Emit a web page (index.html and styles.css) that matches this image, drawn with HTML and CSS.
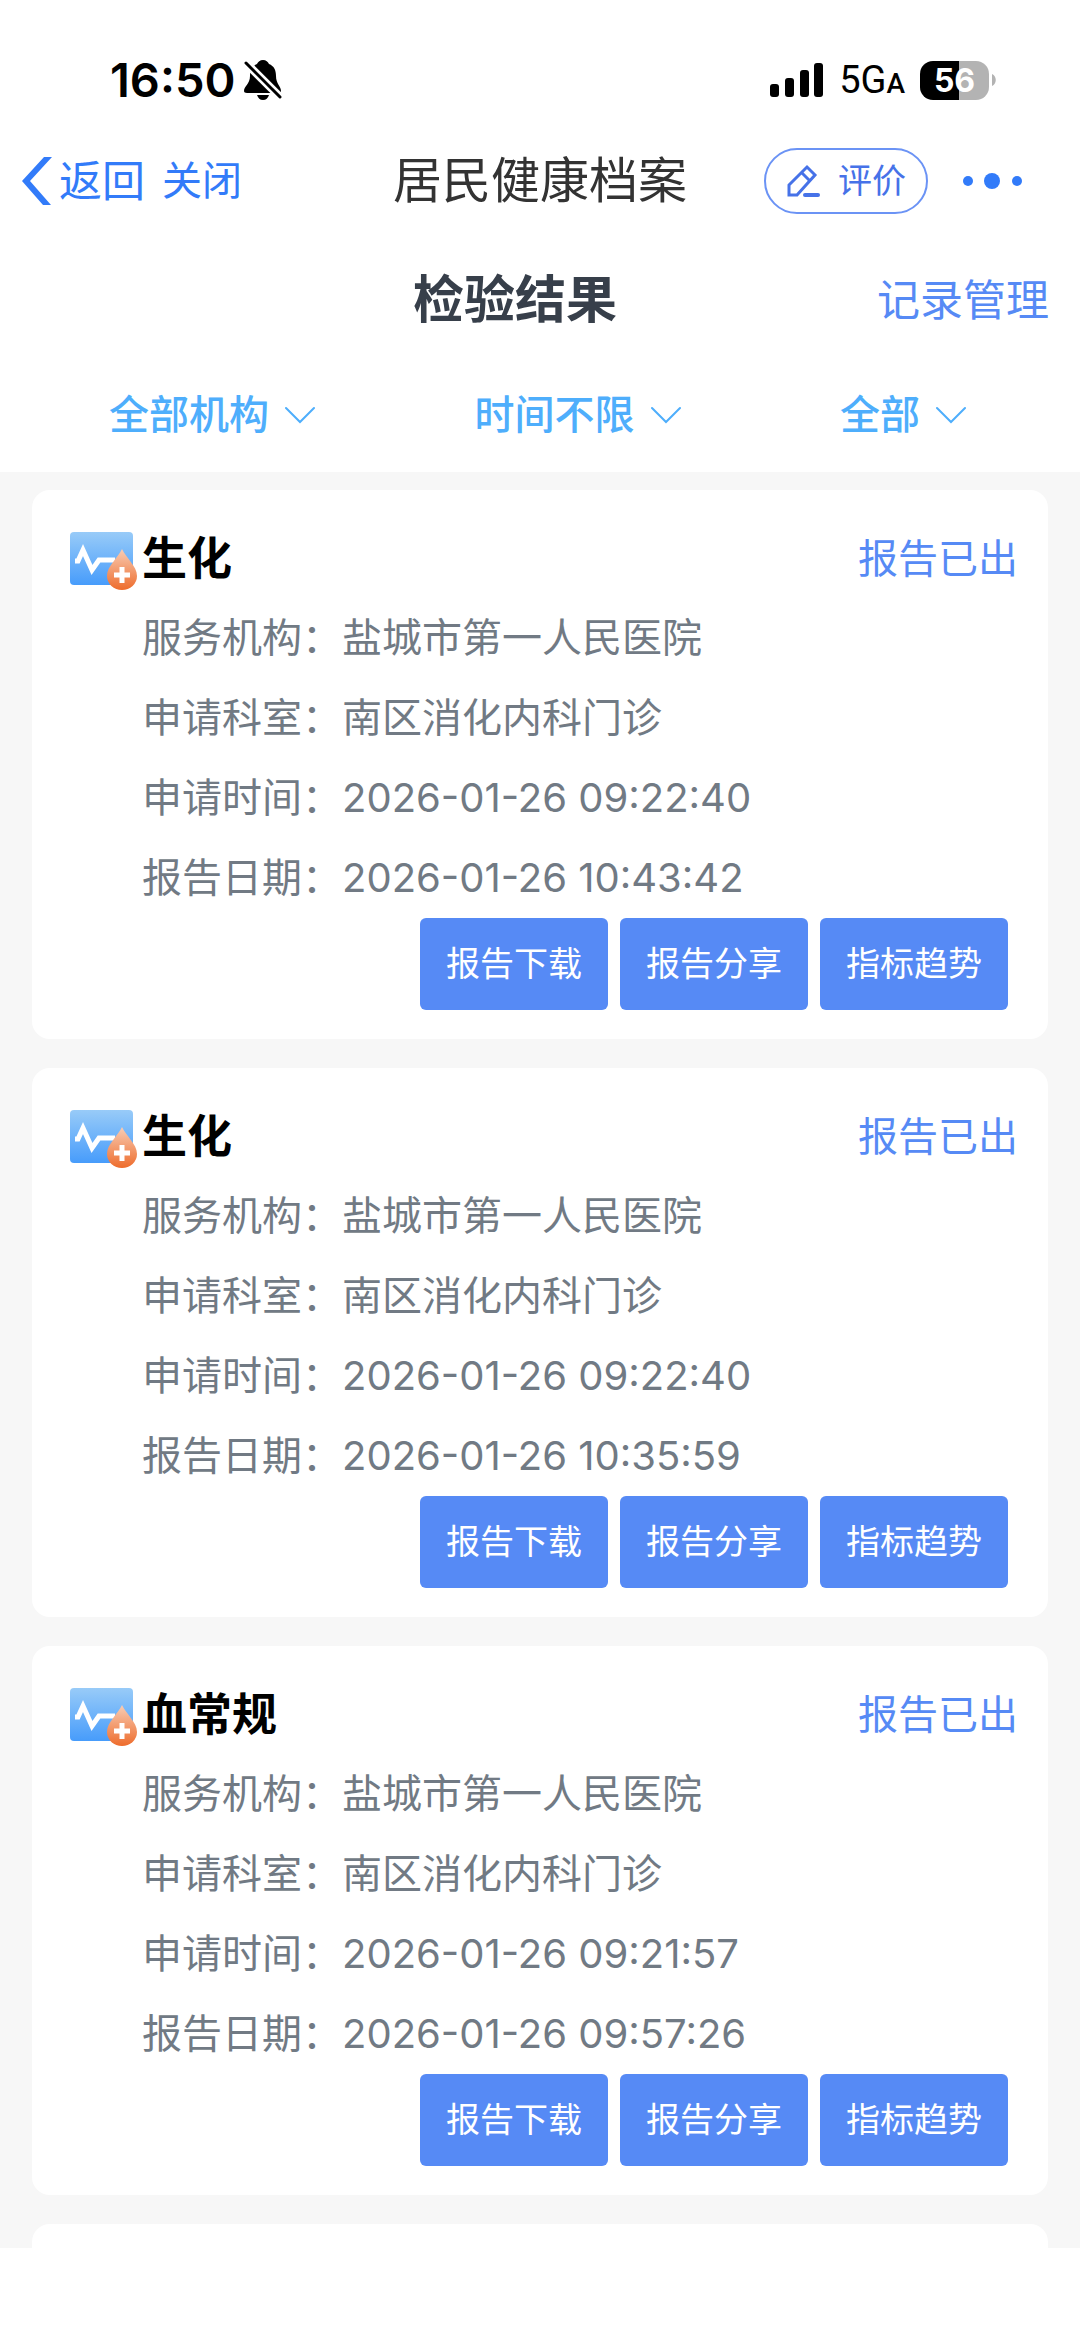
FILE: index.html
```html
<!DOCTYPE html>
<html lang="zh-CN">
<head>
    <meta charset="UTF-8">
    <meta name="viewport" content="width=device-width, initial-scale=1.0">
    <title>居民健康档案</title>
    <link rel="stylesheet" href="styles.css">
</head>
<body>
    <!-- 公用图标 -->
    <svg class="sprite" aria-hidden="true">
        <defs>
            <linearGradient id="boardFill" x1="0" y1="0" x2="0" y2="1">
                <stop offset="0" stop-color="#98cbf8"/>
                <stop offset="1" stop-color="#479cfb"/>
            </linearGradient>
            <linearGradient id="dropFill" x1="0" y1="0" x2="0" y2="1">
                <stop offset="0" stop-color="#f8cdb5"/>
                <stop offset="1" stop-color="#ee6c2c"/>
            </linearGradient>
        </defs>
        <symbol id="icon-report" viewBox="0 -4 68 62">
            <rect x="0" y="0" width="63" height="53" rx="4" fill="url(#boardFill)"/>
            <path d="M5 29h3l5-11 9 20 7-10h16" fill="none" stroke="#fff" stroke-width="5"/>
            <path d="M52 17c4 9 15 17 15 27a15 14 0 0 1-30 0c0-10 11-18 15-27z" fill="url(#dropFill)"/>
            <path d="M52 35v16M44 43h16" fill="none" stroke="#fff" stroke-width="5"/>
        </symbol>
        <symbol id="icon-down" viewBox="0 0 30 18">
            <path d="M1 2l14 14L29 2" fill="none" stroke="currentColor" stroke-width="2" stroke-linecap="round"/>
        </symbol>
    </svg>

    <div class="app">
        <div class="status-bar">
            <div class="status-left">
                <span class="time">16:50</span>
                <svg width="38" height="42" viewBox="0 0 38 42">
                    <path d="M19 1c3 0 5 2 6 4 5 2 7 6 7 12 0 8 5 10 5 15 0 1-1 2-2 2H3c-2 0-3-1-3-2 0-5 6-7 6-15 0-6 2-10 7-12 1-2 3-4 6-4z"/>
                    <path d="M13 36h12c-1 3-3 5-6 5s-5-2-6-5z"/>
                    <path d="M0 2l37 37" stroke="#fff" stroke-width="8"/>
                    <path d="M2 4l34 34" stroke="#000" stroke-width="3" stroke-linecap="round"/>
                </svg>
            </div>
            <div class="status-right">
                <svg width="54" height="36" viewBox="0 0 54 36">
                    <rect x="0" y="22" width="9" height="13" rx="3"/>
                    <rect x="15" y="16" width="9" height="19" rx="3"/>
                    <rect x="30" y="8" width="9" height="27" rx="3"/>
                    <rect x="44" y="1" width="9" height="34" rx="3"/>
                </svg>
                <span class="network">5G<small>A</small></span>
                <span class="battery">56</span>
                <svg width="4" height="12" viewBox="0 0 4 12"><path d="M0 0c5 2 5 10 0 12z" fill="#b3b3b3"/></svg>
            </div>
        </div>

        <header class="nav-bar">
            <div class="nav-left">
                <button class="back" type="button">
                    <svg width="32" height="48" viewBox="0 0 32 48"><path d="M22 0h8L8 24l21 24h-8L0 24z" fill="currentColor"/></svg>
                    返回
                </button>
                <button class="close" type="button">关闭</button>
            </div>
            <h1>居民健康档案</h1>
            <div class="nav-right">
                <button class="rate" type="button">
                    <svg width="34" height="34" viewBox="0 0 34 34" fill="none" stroke="currentColor" stroke-width="3">
                        <path d="M3 21L21 3l8 8-18 20H3z"/>
                        <path d="M16 9l8 8"/>
                        <path d="M19 31h13" stroke-width="4" stroke-linecap="round"/>
                    </svg>
                    评价
                </button>
                <button class="more" type="button" aria-label="更多">
                    <svg width="60" height="18" viewBox="0 0 60 18" fill="currentColor">
                        <circle cx="6" cy="9" r="5"/>
                        <circle cx="30" cy="9" r="8"/>
                        <circle cx="55" cy="9" r="5"/>
                    </svg>
                </button>
            </div>
        </header>

        <div class="page-title">
            <h2>检验结果</h2>
            <a href="#">记录管理</a>
        </div>

        <div class="filters">
            <label class="filter">
                <select aria-label="机构"><option>全部机构</option></select>
                <svg width="30" height="18"><use href="#icon-down"/></svg>
            </label>
            <label class="filter">
                <select aria-label="时间"><option>时间不限</option></select>
                <svg width="30" height="18"><use href="#icon-down"/></svg>
            </label>
            <label class="filter">
                <select aria-label="类型"><option>全部</option></select>
                <svg width="30" height="18"><use href="#icon-down"/></svg>
            </label>
        </div>

        <main class="report-list">
            <article class="card">
                <div class="card-head">
                    <svg width="68" height="62"><use href="#icon-report"/></svg>
                    <h3>生化</h3>
                    <span class="state">报告已出</span>
                </div>
                <dl>
                    <dt>服务机构：</dt><dd>盐城市第一人民医院</dd>
                    <dt>申请科室：</dt><dd>南区消化内科门诊</dd>
                    <dt>申请时间：</dt><dd>2026-01-26 09:22:40</dd>
                    <dt>报告日期：</dt><dd>2026-01-26 10:43:42</dd>
                </dl>
                <div class="actions">
                    <button type="button">报告下载</button>
                    <button type="button">报告分享</button>
                    <button type="button">指标趋势</button>
                </div>
            </article>

            <article class="card">
                <div class="card-head">
                    <svg width="68" height="62"><use href="#icon-report"/></svg>
                    <h3>生化</h3>
                    <span class="state">报告已出</span>
                </div>
                <dl>
                    <dt>服务机构：</dt><dd>盐城市第一人民医院</dd>
                    <dt>申请科室：</dt><dd>南区消化内科门诊</dd>
                    <dt>申请时间：</dt><dd>2026-01-26 09:22:40</dd>
                    <dt>报告日期：</dt><dd>2026-01-26 10:35:59</dd>
                </dl>
                <div class="actions">
                    <button type="button">报告下载</button>
                    <button type="button">报告分享</button>
                    <button type="button">指标趋势</button>
                </div>
            </article>

            <article class="card">
                <div class="card-head">
                    <svg width="68" height="62"><use href="#icon-report"/></svg>
                    <h3>血常规</h3>
                    <span class="state">报告已出</span>
                </div>
                <dl>
                    <dt>服务机构：</dt><dd>盐城市第一人民医院</dd>
                    <dt>申请科室：</dt><dd>南区消化内科门诊</dd>
                    <dt>申请时间：</dt><dd>2026-01-26 09:21:57</dd>
                    <dt>报告日期：</dt><dd>2026-01-26 09:57:26</dd>
                </dl>
                <div class="actions">
                    <button type="button">报告下载</button>
                    <button type="button">报告分享</button>
                    <button type="button">指标趋势</button>
                </div>
            </article>

            <article class="card"></article>
        </main>
    </div>
</body>
</html>
```
FILE: styles.css
```css
* {
    margin: 0;
    padding: 0;
    box-sizing: border-box;
}

body {
    font-family: Inter, "Noto Sans CJK SC", sans-serif;
    font-size: 40px;
    background-color: #fff;
    color: #333;
}

button,
select {
    font: inherit;
    color: inherit;
    background: none;
    border: none;
    cursor: pointer;
}

a {
    text-decoration: none;
}

svg {
    display: block;
    flex-shrink: 0;
}

.sprite {
    position: absolute;
    width: 0;
    height: 0;
}

.app {
    display: flex;
    flex-direction: column;
    height: 100vh;
    padding-bottom: 93px;
}

/* 状态栏 */
.status-bar {
    display: flex;
    justify-content: space-between;
    align-items: center;
    padding: 40px 84px 0 110px;
    line-height: 80px;
    color: #000;
}

.status-left,
.status-right {
    display: flex;
    align-items: center;
}

.status-left {
    gap: 8px;
}

.time {
    font-size: 47px;
    font-weight: 600;
}

.network {
    margin: 0 15px;
    font-family: Roboto, sans-serif;
    font-size: 38px;
    line-height: 1;
}

.network small {
    font-size: 28px;
    font-weight: 500;
}

.battery {
    width: 69px;
    margin-right: 3px;
    border-radius: 13px;
    background: linear-gradient(to right, #000 56%, #b3b3b3 56%);
    color: #fff;
    font-size: 32px;
    font-weight: 700;
    line-height: 39px;
    text-align: center;
}

/* 导航栏 */
.nav-bar {
    display: grid;
    grid-template-columns: 1fr auto 1fr;
    align-items: center;
    padding: 0 22px;
    line-height: 122px;
    color: #327bf9;
}

.nav-bar h1 {
    font-size: 49px;
    font-weight: 400;
    color: #333;
}

.nav-left,
.nav-right,
.back {
    display: flex;
    align-items: center;
}

.nav-left {
    gap: 17px;
}

.back {
    gap: 5px;
    font-size: 43px;
}

.nav-right {
    justify-content: flex-end;
    gap: 34px;
    padding-right: 36px;
}

.rate {
    display: flex;
    justify-content: center;
    align-items: center;
    gap: 18px;
    width: 164px;
    border: 2px solid #6b93f5;
    border-radius: 34px;
    color: #4672e8;
    font-size: 34px;
    line-height: 62px;
}

/* 页面标题 */
.page-title {
    display: flex;
    align-items: center;
    padding: 0 31px 0 153px;
    line-height: 116px;
}

.page-title h2 {
    flex: 1;
    font-size: 51px;
    font-weight: 600;
    color: #373f4a;
    text-align: center;
}

.page-title a {
    font-size: 43px;
    color: #568af5;
}

/* 筛选 */
.filters {
    display: flex;
    justify-content: space-between;
    padding: 0 114px 0 109px;
    color: #4eaefc;
    font-weight: 500;
    line-height: 114px;
}

.filter {
    display: flex;
    align-items: center;
    gap: 16px;
}

.filter select {
    appearance: none;
}

/* 报告列表 */
.report-list {
    flex: 1;
    display: flex;
    flex-direction: column;
    gap: 29px;
    min-height: 0;
    padding: 18px 32px 0;
    overflow-y: auto;
    scrollbar-width: none;
    background-color: #f7f7f7;
}

.card {
    flex-shrink: 0;
    padding: 30px 0 29px;
    border-radius: 18px;
    background-color: #fff;
}

.card-head {
    display: flex;
    align-items: center;
    gap: 4px;
    padding: 0 30px 0 38px;
    line-height: 78px;
}

.card-head h3 {
    font-size: 45px;
    font-weight: 700;
    color: #000;
}

.state {
    margin-left: auto;
    color: #568af5;
}

.card dl {
    display: grid;
    grid-template-columns: auto 1fr;
    padding-left: 110px;
    line-height: 80px;
    color: #717a84;
}

.actions {
    display: flex;
    justify-content: flex-end;
    gap: 12px;
    padding-right: 40px;
}

.actions button {
    padding: 0 26px;
    border-radius: 6px;
    background-color: #568af5;
    color: #fff;
    font-size: 34px;
    line-height: 92px;
}
```
